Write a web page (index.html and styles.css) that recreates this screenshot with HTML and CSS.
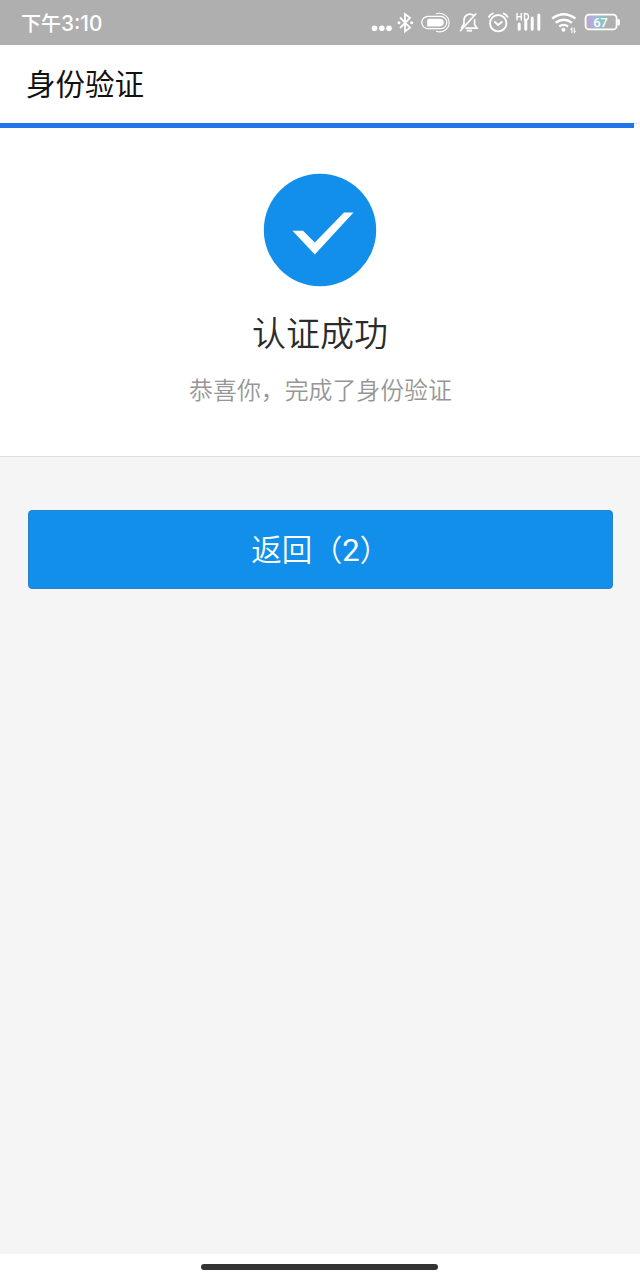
FILE: index.html
```html
<!DOCTYPE html>
<html lang="zh-CN">
<head>
<meta charset="utf-8">
<title>身份验证</title>
<link rel="stylesheet" href="styles.css">
</head>
<body>
<div class="screen">
  <div class="status">
    <span class="time">下午<span class="clock">3:10</span></span>
    <div class="icons">
      <svg width="24" height="45" viewBox="370 0 24 45" fill="#fff"><circle cx="374.5" cy="28.3" r="2.8"/><circle cx="381.8" cy="28.3" r="2.8"/><circle cx="389" cy="28.3" r="2.8"/></svg>
      <svg width="24" height="45" viewBox="394 0 24 45" fill="none" stroke="#fff" stroke-width="1.8"><path d="M400 17.5L410 27.7L405 31.5V14L410 17.8L400 28"/><circle cx="399" cy="22.7" r="1.5" fill="#fff" stroke="none"/><circle cx="411.7" cy="22.7" r="1.5" fill="#fff" stroke="none"/></svg>
      <svg width="38" height="45" viewBox="418 0 38 45" fill="none" stroke="#fff"><rect x="421.8" y="16.3" width="25" height="12.4" rx="6.2" stroke-width="1.3"/><path d="M429 18.8H440a3.8 3.8 0 0 1 0 7.6H427.2V20.6a1.8 1.8 0 0 1 1.8-1.8Z" fill="#fff" stroke="none"/><path d="M436 13.7c6-1.8 12.7 2 13.1 8.6c.2 7-6.7 11.2-13.1 8.9" stroke-width="1.1"/></svg>
      <svg width="28" height="45" viewBox="456 0 28 45" fill="none" stroke="#fff" stroke-width="1.7"><path d="M473.8 15.5c-4.3-3-9.5-.7-9.8 4.5v4l-2.8 4.2M465.5 28.2H477l-2.4-3.8v-5.2"/><path d="M460 31.2L476.2 13.5"/><path d="M466.7 30.6h5.4" stroke-width="2"/></svg>
      <svg width="30" height="45" viewBox="484 0 30 45" fill="none" stroke="#fff" stroke-width="1.8"><circle cx="498.2" cy="23.2" r="8.2"/><path d="M494.2 21.5l4 3.5 4.2-3.5M488.5 17.5q1.5-3 5-4.3M508 17.5q-1.5-3-5-4.3"/></svg>
      <svg width="32" height="45" viewBox="514 0 32 45" fill="none" stroke="#fff"><path d="M517 13v7.5M521.3 13v7.5M517 16.8h4.3M524.5 13.6v6.3h1.5q2.5 0 2.5-3.1t-2.5-3.1Z" stroke-width="1.4"/><path d="M519.2 24v5.2M525.8 20v9.2M532.2 18v11.2M538.8 15v14.2" stroke-width="3" stroke-linecap="round"/></svg>
      <svg width="36" height="45" viewBox="546 0 36 45" fill="none" stroke="#fff"><path d="M552.2 18.5q11.5-8.7 23.2 0M555.7 22.8q8-6 16.2 0M559.3 26.4q4.3-3 8.8 0" stroke-width="2.4"/><circle cx="563.5" cy="29.7" r="2" fill="#fff" stroke="none"/><path d="M571.8 33v-4.8l-1.2 1.5M574.3 27.7v4.8l1.2-1.5" stroke-width="1.1"/></svg>
      <svg width="40" height="45" viewBox="582 0 40 45"><defs><linearGradient id="charge"><stop stop-color="#c2a1d5"/><stop offset=".45" stop-color="#a1b8d9"/><stop offset="1" stop-color="#75cdb1"/></linearGradient></defs><path d="M587 16H606.5L602.5 28H587Z" fill="url(#charge)"/><rect x="585.6" y="14.6" width="31" height="14.8" rx="3.5" fill="none" stroke="#fff" stroke-width="1.8"/><path d="M617.4 19h1q1.5 0 1.5 1.5v3.4q0 1.5-1.5 1.5h-1Z" fill="#fff"/><text class="percent" x="600.6" y="26.8" text-anchor="middle">67</text></svg>
    </div>
  </div>
  <header class="header">身份验证</header>
  <div class="progress"><div class="progress-fill"></div></div>
  <main class="result">
    <svg class="success" width="114" height="114" viewBox="0 0 114 114"><circle cx="57" cy="57" r="56.2" fill="#128fea"/><path d="M29.5 57.8H40L51.8 69.5L81 39.5H90.5L51.8 81.5Z" fill="#fff"/></svg>
    <h1 class="title">认证成功</h1>
    <p class="message">恭喜你，完成了身份验证</p>
  </main>
  <section class="actions"><button class="back">返回<span class="paren">（</span><span class="count">2</span><span class="paren">）</span></button></section>
  <footer class="navbar"><div class="handle"></div></footer>
</div>
</body>
</html>
```
FILE: styles.css
```css
* { box-sizing: border-box; }
body { margin: 0; font-family: "Noto Sans CJK SC", sans-serif; }
.screen { width: 640px; height: 1280px; display: flex; flex-direction: column; background: #fff; }
.status { height: 45px; flex: none; padding: 0 18px 0 21px; display: flex; justify-content: space-between; background: #afafaf; color: #fff; }
.time { font-size: 20px; font-weight: 500; line-height: 45px; }
.clock { font-family: Inter, sans-serif; font-size: 20.8px; }
.icons { display: flex; }
.icons svg { display: block; }
.percent { font: 500 13px Roboto, sans-serif; fill: #fff; }
.header { height: 78px; flex: none; padding-left: 26px; font-size: 29.5px; line-height: 75px; color: #111; }
.progress { height: 5px; flex: none; border-top: 1px solid #e8e8e8; }
.progress-fill { width: 634px; height: 5px; margin-top: -1px; background: #2176ea; }
.result { height: 329px; flex: none; padding-top: 45px; border-bottom: 1px solid #dedede; display: flex; flex-direction: column; align-items: center; }
.success { display: block; flex: none; }
.title { margin: 21px 0 0; font-size: 34px; font-weight: 350; line-height: 48px; color: #2b2b2b; }
.message { margin: 15px 0 0; padding-left: 1px; font-size: 23.9px; line-height: 36px; color: #969696; font-weight: 350; }
.actions { flex: 1; padding: 53px 27px 0 28px; background: #f5f5f5; }
.back { display: block; width: 585px; height: 79px; padding: 0 0 4px; border: 1px solid #2b83c9; border-radius: 4px; background: #128fea; color: #fff; font: 350 30.5px "Noto Sans CJK SC", sans-serif; }
.paren { font-size: 30px; }
.count { font-family: Roboto, sans-serif; font-size: 31px; font-weight: 400; }
.navbar { height: 26px; flex: none; padding-top: 10px; background: #fff; }
.handle { width: 237px; height: 6px; margin-left: 201px; border-radius: 3px; background: #333; }
```
